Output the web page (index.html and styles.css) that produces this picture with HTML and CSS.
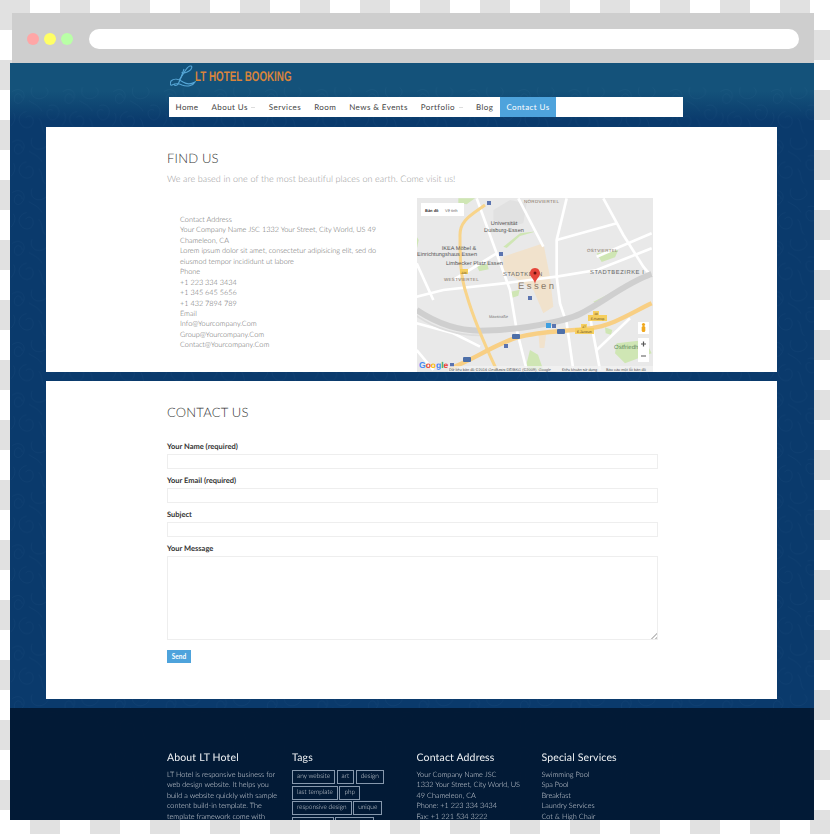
FILE: index.html
```html
<!DOCTYPE html>
<html lang="en">
<head>
<meta charset="utf-8">
<title>LT Hotel Booking - Contact Us</title>
<link rel="stylesheet" href="styles.css">
</head>
<body>
<svg class="defs" width="0" height="0" aria-hidden="true">
  <defs>
    <pattern id="floral" width="92" height="92" patternUnits="userSpaceOnUse" patternTransform="scale(.55)">
      <g fill="none" stroke="#9cc8ee" stroke-width=".9">
        <path d="M4 12c14-10 26 2 20 14s-18 8-16-3 14-8 14 1"/>
        <path d="M40 4c-6 14 6 24 18 20s14-14 6-20"/>
        <path d="M70 38c12-6 22 4 18 16s-16 12-20 2 4-14 10-10"/>
        <path d="M30 48c-12 2-18 14-10 24s22 6 22-6-10-12-14-6"/>
        <path d="M52 60c8 8 4 22 12 28M6 50c6 8 2 18-4 24M34 28c8 6 18 8 24 20"/>
      </g>
    </pattern>
  </defs>
</svg>
<div class="window">
  <div class="chrome">
    <span class="dot dot-red"></span>
    <span class="dot dot-yellow"></span>
    <span class="dot dot-green"></span>
    <span class="address"></span>
  </div>
  <div class="page">
    <svg class="texture" width="804" height="735" aria-hidden="true"><rect width="804" height="735" fill="url(#floral)"/></svg>
    <header class="site-header">
      <a class="logo">
        <svg class="logo-mark" width="26" height="24" viewBox="0 0 26 24" aria-hidden="true">
          <g fill="none" stroke="#56a6d6" stroke-width="1.1">
            <path d="M9 16C14 10 16 3 20 2c3-.6 2 3-1 5-3 2-7 3-7 1"/>
            <path d="M14 5c-2 6-4 12-6 15-1 2-4 2-4 0"/>
            <path d="M1 17c3-3 8-2 12 1 3 2 7 3 12 0-2 4-8 5-13 3-4-2-8-1-10 0-2 1-2-2-1-4z"/>
          </g>
        </svg>
        <span class="logo-text">LT HOTEL BOOKING</span>
      </a>
      <nav class="menu">
        <a class="menu-item">Home</a>
        <a class="menu-item has-sub">About Us</a>
        <a class="menu-item">Services</a>
        <a class="menu-item">Room</a>
        <a class="menu-item">News &amp; Events</a>
        <a class="menu-item has-sub">Portfolio</a>
        <a class="menu-item">Blog</a>
        <a class="menu-item active">Contact Us</a>
      </nav>
    </header>
    <main class="main">
      <section class="card card-find">
        <h2 class="card-title">FIND US</h2>
        <p class="lead">We are based in one of the most beautiful places on earth. Come visit us!</p>
        <div class="find-row">
          <div class="address-block">
            <p>Contact Address</p>
            <p>Your Company Name JSC 1332 Your Street, City World, US 49 Chameleon, CA</p>
            <p>Lorem ipsum dolor sit amet, consectetur adipisicing elit, sed do eiusmod tempor incididunt ut labore</p>
            <p>Phone</p>
            <p>+1 223 334 3434</p>
            <p>+1 345 645 5656</p>
            <p>+1 432 7894 789</p>
            <p>Email</p>
            <p>Info@Yourcompany.Com</p>
            <p>Group@Yourcompany.Com</p>
            <p>Contact@Yourcompany.Com</p>
          </div>
          <svg class="map" width="236" height="174" viewBox="0 0 236 174" role="img" aria-label="Map of Essen">
            <rect width="236" height="174" fill="#e9e9e9"/>
            <g transform="translate(-7 -8) scale(.33333)">
              <g fill="#cfe6b4">
                <path d="M145 25h50l-25 18-25-4zM20 140l6 10-6 30zM200 228l32-6 4 16-28 6zM303 305l26-6-4 18-18 6zM560 190l65-10-10 22-40 14zM350 520l10-40 24 14 16 46h-46zM585 412l22 8-4 14-16-4zM620 460l85-10 20 40-80 30-30-30zM550 335l60-30-10 16-40 22zM280 170l50-40 50-6-50 14-40 36z"/>
              </g>
              <path d="M250 60l50-30 50 10-10 60-50 10-40-20z" fill="#e1e1e1"/>
              <path d="M280 200l120-40 20 100 10 90-30 20-30-70-90-60z" fill="#f1e2cc"/>
              <path d="M385 430h24l-6 44-14 0z" fill="#f1e2cc"/>
              <g fill="none" stroke="#fff" stroke-width="8">
                <path d="M200 25l60 165 40 110 20 120 30 120"/>
                <path d="M470 25l-30 125v110l10 80 20 60 20 140"/>
                <path d="M580 25l60 110 60 95 25 30"/>
                <path d="M20 320l80-20 180-20 160-20 120-20 165-65"/>
                <path d="M440 150l180-50"/>
                <path d="M725 130l-165 70"/>
                <path d="M20 400l110 30 80 40"/>
                <path d="M325 25l75 145"/>
                <path d="M540 380l30 160"/>
                <path d="M660 385l-100 95"/>
                <path d="M20 220l50 110"/>
                <path d="M260 190L130 270"/>
                <path d="M20 480l50 60"/>
              </g>
              <path d="M20 360c60 40 120 62 190 62 120 0 260-30 300-50 70-35 140-95 215-120" fill="none" stroke="#cfcfcf" stroke-width="18"/>
              <path d="M20 378c60 40 130 58 190 58" fill="none" stroke="#dcdcdc" stroke-width="5"/>
              <g fill="none" stroke="#f8d48a" stroke-width="9">
                <path d="M225 45c-40 30-75 45-75 90 0 70 0 120 20 180 20 70 50 140 90 225"/>
              </g>
              <path d="M120 535c60-20 130-70 200-92 70-20 140-18 220-28 70-8 130-50 185-75" fill="none" stroke="#f8cf84" stroke-width="13"/>
            </g>
            <g class="map-labels">
              <text class="lab-road" x="107" y="5">NORDVIERTEL</text>
              <text x="87" y="27" text-anchor="middle">Universit&#228;t</text>
              <text x="87" y="33.500" text-anchor="middle">Duisburg-Essen</text>
              <text x="42" y="52" text-anchor="middle">IKEA M&#246;bel &amp;</text>
              <text x="0" y="58">Einrichtungshaus Essen</text>
              <text x="29" y="67">Limbecker Platz Essen</text>
              <text class="lab-road" x="27" y="83">WESTVIERTEL</text>
              <text class="lab-road" x="170" y="54">OSTVIERTEL</text>
              <text class="lab-big" x="86" y="78">STADTKERN</text>
              <text class="lab-big" x="173" y="76">STADTBEZIRKE I</text>
              <text class="lab-city" x="101" y="91">Essen</text>
              <text class="lab-green" x="197" y="151">Ostfriedh</text>
              <text class="lab-street" x="72" y="120">Maxstra&#223;e</text>
            </g>
            <g fill="#f6cf5f">
              <rect x="43" y="71" width="8" height="5"/>
              <rect x="171" y="117" width="19" height="6"/>
              <rect x="158" y="130" width="19" height="6"/>
              <rect x="176" y="113" width="6" height="4"/>
              <rect x="164" y="126" width="6" height="4"/>
            </g>
            <g class="map-shields">
              <text x="47" y="75.500" text-anchor="middle">224</text>
              <text x="179" y="116.500" text-anchor="middle">38</text>
              <text x="180.500" y="122" text-anchor="middle">E-Huttrop</text>
              <text x="167" y="129.500" text-anchor="middle">27</text>
              <text x="167.500" y="135" text-anchor="middle">E-Zentrum</text>
            </g>
            <g fill="#5b74b0">
              <rect x="70" y="3" width="4" height="4"/>
              <rect x="82" y="54" width="4" height="4"/>
              <rect x="111" y="98" width="4" height="4"/>
              <rect x="135" y="126" width="4" height="4"/>
              <rect x="87" y="146" width="4" height="4"/>
              <rect x="33" y="165" width="4" height="4"/>
            </g>
            <rect x="129" y="125" width="5" height="5" fill="#3f9fe0"/>
            <g fill="#4d6fa8">
              <rect x="95" y="136" width="8" height="5" rx="1"/>
              <rect x="140" y="131" width="8" height="5" rx="1"/>
              <rect x="46" y="159" width="8" height="5" rx="1"/>
            </g>
            <path d="M118 70c-3.500 0-5 3-5 5.500 0 3.500 4 5 5 10.500 1-5.500 5-7 5-10.500 0-2.500-1.500-5.500-5-5.500z" fill="#e5453a"/>
            <circle cx="118" cy="75" r="1.500" fill="#6e1410"/>
            <rect x="4" y="5" width="43" height="13" fill="#fff"/>
            <text class="lab-tab" x="8" y="13.500">B&#7843;n &#273;&#7891;</text>
            <text class="lab-tab2" x="28" y="13.500">V&#7879; tinh</text>
            <rect x="221" y="124" width="11" height="12" fill="#fff"/>
            <circle cx="226.500" cy="126.500" r="1.600" fill="#f0a81e"/>
            <rect x="224.700" y="128" width="3.600" height="6" rx="1.500" fill="#f0a81e"/>
            <rect x="221" y="140" width="11" height="24" fill="#fff"/>
            <path d="M224 146h5M226.500 143.500v5M224 158h5" stroke="#555" stroke-width="1.200"/>
            <text class="lab-google" x="2" y="170"><tspan fill="#4285f4">G</tspan><tspan fill="#ea4335">o</tspan><tspan fill="#fbbc05">o</tspan><tspan fill="#4285f4">g</tspan><tspan fill="#34a853">l</tspan><tspan fill="#ea4335">e</tspan></text>
            <rect x="31" y="168" width="205" height="6" fill="#f2f2f2" opacity=".75"/>
            <text class="lab-attr" x="32" y="172.500">D&#7919; li&#7879;u b&#7843;n &#273;&#7891; &#169;2016 GeoBasis-DE/BKG (&#169;2009), Google</text>
            <text class="lab-attr" x="145" y="172.500">&#272;i&#7873;u kho&#7843;n s&#7917; d&#7909;ng</text>
            <text class="lab-attr" x="189" y="172.500">B&#225;o c&#225;o m&#7897;t l&#7895;i b&#7843;n &#273;&#7891;</text>
          </svg>
        </div>
      </section>
      <section class="card card-contact">
        <h2 class="card-title">CONTACT US</h2>
        <form class="form">
          <label class="field"><span class="field-label">Your Name (required)</span><input class="input" type="text"></label>
          <label class="field"><span class="field-label">Your Email (required)</span><input class="input" type="text"></label>
          <label class="field"><span class="field-label">Subject</span><input class="input" type="text"></label>
          <label class="field"><span class="field-label">Your Message</span><textarea class="input textarea"></textarea></label>
          <button class="send" type="button">Send</button>
        </form>
      </section>
    </main>
    <footer class="footer">
      <div class="foot-col foot-about">
        <h3 class="foot-title">About LT Hotel</h3>
        <p class="foot-text">LT Hotel is responsive business for web design website. It helps you build a website quickly with sample content build-in template. The template framework come with</p>
      </div>
      <div class="foot-col foot-tags">
        <h3 class="foot-title">Tags</h3>
        <div class="tags">
          <a class="tag">any website</a><a class="tag">art</a><a class="tag">design</a>
          <a class="tag">last template</a><a class="tag">php</a>
          <a class="tag">responsive design</a><a class="tag">unique</a>
          <a class="tag">web design</a><a class="tag">wordpress</a>
        </div>
      </div>
      <div class="foot-col foot-contact">
        <h3 class="foot-title">Contact Address</h3>
        <p class="foot-text">Your Company Name JSC<br>1332 Your Street, City World, US<br>49 Chameleon, CA<br>Phone: +1 223 334 3434<br>Fax: +1 221 534 3222</p>
      </div>
      <div class="foot-col foot-services">
        <h3 class="foot-title">Special Services</h3>
        <ul class="foot-list">
          <li>Swimming Pool</li>
          <li>Spa Pool</li>
          <li>Breakfast</li>
          <li>Laundry Services</li>
          <li>Cot &amp; High Chair</li>
        </ul>
      </div>
    </footer>
  </div>
</div>
</body>
</html>
```
FILE: styles.css
```css
* { box-sizing: border-box; }
html, body { margin: 0; padding: 0; }
body {
  width: 830px;
  height: 834px;
  overflow: hidden;
  font-family: "Lato", "Liberation Sans", sans-serif;
  text-rendering: geometricPrecision;
  background-color: #fff;
  background-image:
    linear-gradient(45deg, #e1e1e1 25%, transparent 25%, transparent 75%, #e1e1e1 75%),
    linear-gradient(45deg, #e1e1e1 25%, transparent 25%, transparent 75%, #e1e1e1 75%);
  background-size: 60px 60px;
  background-position: 0 30px, 30px 0;
}
.defs { position: absolute; }
.window { width: 804px; margin-left: 10px; padding-top: 13px; filter: blur(.35px); }
.chrome {
  height: 50px;
  margin-left: 2px;
  padding: 16px 15px 0 15px;
  background: #cecece;
  display: flex;
  align-items: flex-start;
  gap: 5px;
}
.dot { width: 12px; height: 12px; border-radius: 50%; margin-top: 4px; }
.dot-red { background: #ffa6a6; }
.dot-yellow { background: #ffff66; }
.dot-green { background: #b9ffa6; }
.address { flex: 1; height: 20px; margin-left: 11px; border-radius: 10px; background: #fff; }

.page {
  position: relative;
  height: 757px;
  overflow: hidden;
  background: linear-gradient(#14527a 0, #14527a 28px, #0a3a6c 58px, #0a3a6c 100%);
}
.texture { position: absolute; left: 0; top: 22px; opacity: .09; }
.site-header { position: relative; height: 64px; padding-left: 159px; }
.logo { display: flex; align-items: center; height: 34px; padding-bottom: 9px; }
.logo-mark { margin-left: 1px; }
.logo-text {
  margin-left: -1px;
  font-family: "Liberation Sans", sans-serif;
  font-size: 14px;
  line-height: 14px;
  font-weight: 700;
  color: #d9843b;
  transform: scaleX(.7);
  transform-origin: left center;
  white-space: nowrap;
}
.menu {
  display: flex;
  width: 514px;
  height: 20px;
  background: #fff;
  font-size: 8px;
  letter-spacing: .42px;
}
.menu-item {
  display: block;
  padding: 0 6.500px;
  line-height: 20px;
  color: #444;
  white-space: nowrap;
}
.menu-item.has-sub {
  display: flex;
  align-items: center;
  gap: 3.500px;
  padding-right: 7px;
}
.menu-item.has-sub::after {
  content: "";
  width: 4px;
  height: 1px;
  background: #ddd;
}
.menu-item.active { background: #4ea3dc; color: #fff; }

.main { position: relative; padding: 0 37px 0 36px; display: flex; flex-direction: column; gap: 9px; }
.card { background: #fff; padding-left: 121px; }
.card-find { height: 245px; padding-top: 23px; overflow: hidden; }
.card-contact { height: 318px; padding-top: 23px; }
.card-title {
  margin: 0;
  font-size: 13px;
  line-height: 17px;
  font-weight: 300;
  color: #333;
  letter-spacing: .2px;
}
.lead {
  margin: 6px 0 0;
  font-size: 9px;
  line-height: 12px;
  font-weight: 300;
  color: #999;
  letter-spacing: .07px;
}
.find-row { display: flex; margin-top: 13px; }
.address-block {
  width: 250px;
  padding: 17px 37px 0 13px;
  font-size: 7.300px;
  line-height: 10.440px;
  font-weight: 300;
  color: #666;
  flex: none;
}
.address-block p { margin: 0; }
.map { display: block; flex: none; }
.map text { font-family: "Liberation Sans", sans-serif; }
.map-labels text { font-size: 5.600px; fill: #555; }
.map-labels .lab-road { font-size: 4.500px; fill: #7c6a58; letter-spacing: .3px; }
.map-labels .lab-big { font-size: 5.800px; fill: #666; letter-spacing: .55px; }
.map-labels .lab-city { font-size: 9.500px; fill: #8a7a6a; letter-spacing: 2.400px; }
.map-labels .lab-green { font-size: 6px; fill: #5f8a5f; }
.map-labels .lab-street { font-size: 4px; fill: #777; }
.map-shields text { font-size: 3.200px; fill: #5a4a20; }
.map .lab-tab { font-size: 4px; font-weight: 700; fill: #333; }
.map .lab-tab2 { font-size: 4px; fill: #666; }
.map .lab-google { font-size: 8.500px; font-weight: 700; }
.map .lab-attr { font-size: 3.900px; fill: #555; }

.form { width: 491px; margin-top: 21px; }
.field { display: block; margin-bottom: 7px; }
.field-label {
  display: block;
  font-size: 7.500px;
  line-height: 10px;
  font-weight: 700;
  color: #333;
  margin-bottom: 2px;
}
.input {
  display: block;
  width: 100%;
  height: 15px;
  margin: 0;
  padding: 0;
  border: 1px solid #eee;
  background: #fff;
  outline: 0;
}
.textarea { height: 84px; resize: vertical; }
.textarea::-webkit-resizer {
  background: linear-gradient(135deg, transparent 50%, #c4c4c4 50%, #c4c4c4 65%, transparent 65%, transparent 80%, #c4c4c4 80%) right bottom / 6px 6px no-repeat;
}
.send {
  display: block;
  width: 24px;
  height: 13px;
  margin: 10px 0 0;
  padding: 0;
  border: 0;
  background: #4ea3dc;
  color: #fff;
  font-family: inherit;
  font-size: 6.500px;
  line-height: 13px;
  font-weight: 700;
}

.footer {
  position: absolute;
  left: 0;
  right: 0;
  top: 645px;
  height: 112px;
  padding: 44px 0 0 157px;
  display: flex;
  background: rgba(2, 24, 50, .93);
  color: #d5dae0;
}
.foot-col { width: 125px; flex: none; }
.foot-about { padding-right: 8px; }
.foot-contact { margin-left: -.5px; }
.foot-title {
  margin: 0 0 5px;
  font-size: 10.500px;
  line-height: 13px;
  font-weight: 400;
  color: #eef1f4;
  letter-spacing: .15px;
}
.foot-text {
  margin: 0;
  font-size: 7.300px;
  line-height: 10.440px;
  font-weight: 300;
}
.foot-list { margin: 0; padding: 0; list-style: none; font-size: 7.300px; line-height: 10.440px; font-weight: 300; }
.tags { display: flex; flex-wrap: wrap; gap: 1.500px; width: 100px; }
.tag {
  display: block;
  height: 14px;
  padding: 0 4px;
  border: 1px solid #8698ad;
  font-size: 6.500px;
  line-height: 12px;
  font-weight: 300;
  color: #d5dae0;
  white-space: nowrap;
}
```
